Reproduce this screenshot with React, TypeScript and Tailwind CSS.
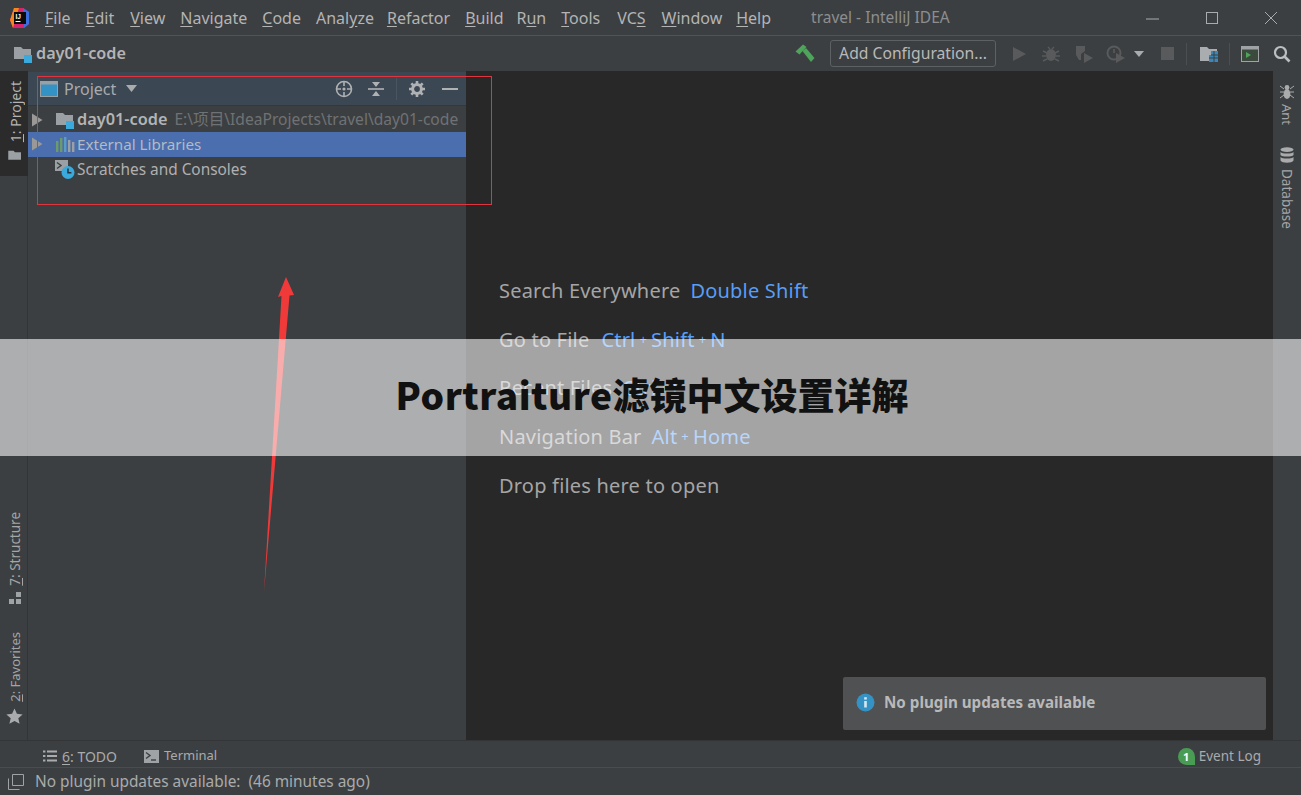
import React from "react";

const FONT = "font-['Noto_Sans','Open_Sans',sans-serif]";

function FolderIcon({ square = true, className = "" }: { square?: boolean; className?: string }) {
  return (
    <svg width="20" height="18" viewBox="0 0 20 18" className={className}>
      <path d="M1 2h7l2 2h8v10H1z" fill="#9aa0a3" />
      {square && <rect x="11" y="10" width="8" height="8" fill="#3aa9dc" />}
    </svg>
  );
}

function Arrow() {
  return (
    <svg width="14" height="14" viewBox="0 0 14 14" className="shrink-0">
      <path d="M2 0.5l10.5 6.5-10.5 6.5z" fill="#9a9997" />
    </svg>
  );
}

function LibIcon() {
  return (
    <svg width="20" height="17" viewBox="0 0 20 17">
      <rect x="1" y="5" width="2.4" height="11" fill="#6d9a6b" />
      <rect x="5" y="2" width="2.4" height="14" fill="#6d9a6b" />
      <rect x="9" y="1" width="2.4" height="15" fill="#5b9cc6" />
      <rect x="13" y="4" width="2.4" height="12" fill="#9aa0a3" />
      <rect x="17" y="6" width="2.4" height="10" fill="#9aa0a3" />
    </svg>
  );
}

function ScratchIcon() {
  return (
    <svg width="21" height="20" viewBox="0 0 21 20">
      <rect x="0" y="0" width="13" height="11" fill="#9aa0a3" />
      <path d="M2 2.5l4 3-4 3" fill="none" stroke="#3c3f41" strokeWidth="1.4" />
      <circle cx="13" cy="12.5" r="6.5" fill="#3aa9dc" />
      <path d="M13 8.5v4.3h3.4" fill="none" stroke="#27333b" strokeWidth="1.5" />
    </svg>
  );
}

function MenuItem({ pre = "", u = "", post = "", className = "" }: { pre?: string; u?: string; post?: string; className?: string }) {
  return (
    <span className={className}>
      {pre}
      <u className="underline-offset-2">{u}</u>
      {post}
    </span>
  );
}

function ShortcutRow({ label, keys, keyClass = "ml-[10px]" }: { label: string; keys: string[]; keyClass?: string }) {
  return (
    <div className="h-[48.75px] flex items-center text-[20px] text-[#a5a5a5] tracking-[0.2px]">
      <span>{label}</span>
      {keys.length > 0 && (
        <span className={`${keyClass} text-[#589df6] flex items-center`}>
          {keys.map((k, i) => (
            <React.Fragment key={k}>
              {i > 0 && <span className="mx-[4px] text-[13px]">+</span>}
              <span>{k}</span>
            </React.Fragment>
          ))}
        </span>
      )}
    </div>
  );
}

function VText({ children, className = "" }: { children: React.ReactNode; className?: string }) {
  return <span className={`[writing-mode:vertical-rl] rotate-180 leading-[16px] ml-[3px] ${className}`}>{children}</span>;
}

export default function App() {
  return (
    <div className={`relative w-[1301px] h-[795px] overflow-hidden flex flex-col bg-[#3c3f41] text-[#bbbbbb] ${FONT}`}>
      {/* Title bar */}
      <div className="h-[36px] shrink-0 flex items-center border-b border-[#515355] pl-[9px]">
        <svg width="22" height="22" viewBox="0 0 22 22" className="shrink-0">
          <path d="M5 1h9l6 4v12l-5 4H4l-3-8z" fill="#d6246e" />
          <path d="M14 1l6 4v12l-5 4z" fill="#3b6fe0" />
          <path d="M1 13L5 1h5L4 21z" fill="#f5871f" />
          <rect x="5" y="5" width="12" height="12" fill="#0b0b0b" />
          <text x="6.5" y="12" fontSize="6.5" fontWeight="700" fill="#fff" fontFamily="Liberation Sans">IJ</text>
          <rect x="6.5" y="14" width="5" height="1" fill="#fff" />
        </svg>
        <div className="ml-[14px] flex items-center text-[16px] text-[#b4b4b4] leading-none">
          <MenuItem u="F" post="ile" />
          <MenuItem u="E" post="dit" className="ml-[15px]" />
          <MenuItem u="V" post="iew" className="ml-[16px]" />
          <MenuItem u="N" post="avigate" className="ml-[15px]" />
          <MenuItem u="C" post="ode" className="ml-[15px]" />
          <MenuItem pre="Anal" u="y" post="ze" className="ml-[15px]" />
          <MenuItem u="R" post="efactor" className="ml-[13px]" />
          <MenuItem u="B" post="uild" className="ml-[15px]" />
          <MenuItem pre="R" u="u" post="n" className="ml-[13px]" />
          <MenuItem u="T" post="ools" className="ml-[15px]" />
          <MenuItem pre="VC" u="S" className="ml-[17px]" />
          <MenuItem u="W" post="indow" className="ml-[16px]" />
          <MenuItem u="H" post="elp" className="ml-[14px]" />
          <span className="ml-[40px] text-[15.5px] text-[#8c8e8f]">travel - IntelliJ IDEA</span>
        </div>
        <div className="ml-auto flex items-center pr-[23px] gap-[45px]">
          <svg width="14" height="14" viewBox="0 0 14 14"><path d="M0 8h13" stroke="#a9abac" strokeWidth="1" /></svg>
          <svg width="14" height="14" viewBox="0 0 14 14"><rect x="1.5" y="1.5" width="11" height="11" fill="none" stroke="#a9abac" /></svg>
          <svg width="14" height="14" viewBox="0 0 14 14"><path d="M1 1l12 12M13 1L1 13" stroke="#a9abac" /></svg>
        </div>
      </div>

      {/* Toolbar */}
      <div className="h-[35px] shrink-0 flex items-center pl-[13px] pr-[10px]">
        <FolderIcon />
        <span className="ml-[3px] text-[16.2px] font-semibold text-[#b4b4b4]">day01-code</span>
        <div className="ml-auto flex items-center">
          <svg width="20" height="20" viewBox="0 0 20 20">
            <path d="M0.500 7.500L8 0.500l3.500 2.500-1.500 1.500L4.500 10.500z" fill="#4ea45a" />
            <path d="M7.500 7l3.500-3L19.500 14l-3.500 4z" fill="#4ea45a" />
          </svg>
          <div className="ml-[15px] h-[27px] w-[166px] flex items-center justify-center rounded-[3px] border border-[#5e6163] pt-px text-[15.7px] text-[#b9b9b9]">
            Add Configuration...
          </div>
          <svg className="ml-[15px]" width="16" height="18" viewBox="0 0 16 18"><path d="M2 2l13 7-13 7z" fill="#585a5b" /></svg>
          <svg className="ml-[15px]" width="18" height="18" viewBox="0 0 18 18">
            <ellipse cx="9" cy="10" rx="5" ry="6" fill="#585a5b" />
            <path d="M1 6l4 2M17 6l-4 2M0 11h4M18 11h-4M1 16l4-2M17 16l-4-2M6 2l2 2M12 2l-2 2" stroke="#585a5b" strokeWidth="1.4" />
          </svg>
          <svg className="ml-[14px]" width="20" height="20" viewBox="0 0 20 20">
            <path d="M2 2h9v5l-4 3v6H5l-3-5z" fill="#585a5b" />
            <path d="M10 9l9 5-9 5z" fill="#585a5b" />
          </svg>
          <svg className="ml-[12px]" width="20" height="20" viewBox="0 0 20 20">
            <circle cx="8" cy="9" r="6.5" fill="none" stroke="#585a5b" strokeWidth="2" />
            <path d="M8 5v4" stroke="#585a5b" strokeWidth="1.6" />
            <path d="M10 9l9 5-9 5z" fill="#585a5b" />
          </svg>
          <svg className="ml-[8px]" width="10" height="6" viewBox="0 0 10 6"><path d="M0 0h10L5 6z" fill="#a9abac" /></svg>
          <div className="ml-[17px] w-[13px] h-[13px] bg-[#585a5b]" />
          <div className="ml-[12px] w-px h-[22px] bg-[#4c4e50]" />
          <svg className="ml-[12px]" width="20" height="18" viewBox="0 0 20 18">
            <path d="M1 2h7l2 2h8v12H1z" fill="#a9adaf" />
            <path d="M12 6h7v11h-9v-7h2z" fill="#3d87b8" />
            <path d="M10 13h9M15 6v11M12 10h7" stroke="#3c3f41" />
          </svg>
          <div className="ml-[10px] w-px h-[22px] bg-[#4c4e50]" />
          <svg className="ml-[11px]" width="18" height="16" viewBox="0 0 18 16">
            <rect x="0.5" y="0.5" width="17" height="15" fill="#3c4a3e" stroke="#a0a3a5" />
            <rect x="0.5" y="0.5" width="17" height="3" fill="#a0a3a5" />
            <path d="M5 6l5 3-5 3z" fill="#4ea45a" />
          </svg>
          <svg className="ml-[14px]" width="18" height="18" viewBox="0 0 18 18">
            <circle cx="7.5" cy="7.5" r="5.500" fill="none" stroke="#bcbfc0" strokeWidth="2.2" />
            <path d="M11.5 11.5l5 5" stroke="#bcbfc0" strokeWidth="2.6" />
          </svg>
        </div>
      </div>

      {/* Main */}
      <div className="flex-1 min-h-0 flex">
        {/* Left stripe */}
        <div className="w-[28px] shrink-0 flex flex-col justify-between border-r border-[#333536]">
          <div className="w-[28px] h-[105px] bg-[#2b2b2b] flex flex-col items-center pt-[10px] gap-[7px]">
            <VText className="text-[14px] text-[#b4b4b4]"><u>1</u>: Project</VText>
            <FolderIcon square={false} className="scale-75 -mt-[2px] ml-[2px]" />
          </div>
          <div className="flex flex-col items-center pb-[15px]">
            <VText className="text-[13.5px] text-[#a5a5a5]"><u>7</u>: Structure</VText>
            <svg className="mt-[6px] ml-[2px]" width="14" height="14" viewBox="0 0 14 14">
              <rect x="8" y="1" width="5" height="5" fill="#a0a3a5" />
              <rect x="1" y="8" width="5" height="5" fill="#a0a3a5" />
              <rect x="8" y="8" width="5" height="5" fill="#a0a3a5" />
            </svg>
            <VText className="text-[13px] text-[#a5a5a5] mt-[27px]"><u>2</u>: Favorites</VText>
            <svg className="mt-[6px] ml-[2px]" width="17" height="17" viewBox="0 0 17 17">
              <path d="M8.5 0.5l2.4 5.3 5.7.6-4.3 3.8 1.3 5.6-5.1-2.9-5.1 2.9 1.3-5.6L.4 6.4l5.7-.6z" fill="#a9abac" />
            </svg>
          </div>
        </div>

        {/* Project panel */}
        <div className="w-[438px] shrink-0 flex flex-col">
          <div className="h-[34px] mt-px shrink-0 flex items-center bg-[#3c4754] border-b border-[#33383d] pl-[12px] pr-[8px]">
            <svg width="18" height="16" viewBox="0 0 18 16">
              <rect x="0.5" y="0.5" width="17" height="15" fill="#3592c4" stroke="#9aa0a3" />
              <rect x="0.5" y="0.5" width="17" height="3" fill="#9aa0a3" />
            </svg>
            <span className="ml-[6px] text-[16px] text-[#a9abac]">Project</span>
            <svg className="ml-[10px]" width="11" height="7" viewBox="0 0 11 7"><path d="M0 0h11L5.5 7z" fill="#a9abac" /></svg>
            <div className="ml-auto flex items-center">
              <svg width="18" height="18" viewBox="0 0 18 18">
                <circle cx="9" cy="9" r="7.5" fill="none" stroke="#afb1b3" strokeWidth="1.6" />
                <circle cx="9" cy="9" r="1.6" fill="#afb1b3" />
                <path d="M9 1v5M9 12v5M1 9h5M12 9h5" stroke="#afb1b3" strokeWidth="1.6" />
              </svg>
              <svg className="ml-[15px]" width="16" height="18" viewBox="0 0 16 18">
                <path d="M0 9h16" stroke="#afb1b3" strokeWidth="1.6" />
                <path d="M8 7L4 2h8zM8 11l4 5H4z" fill="#afb1b3" />
              </svg>
              <div className="ml-[12px] w-px h-[22px] bg-[#4a5561]" />
              <svg className="ml-[12px]" width="16" height="16" viewBox="0 0 16 16">
                <circle cx="8" cy="8" r="4.4" fill="none" stroke="#afb1b3" strokeWidth="3" />
                <path d="M8 0v3M8 13v3M0 8h3M13 8h3M2.3 2.3l2.2 2.2M11.5 11.5l2.2 2.2M13.7 2.3l-2.2 2.2M4.5 11.5l-2.2 2.2" stroke="#afb1b3" strokeWidth="2.6" />
              </svg>
              <div className="ml-[17px] w-[16px] h-[2px] bg-[#afb1b3]" />
            </div>
          </div>
          <div className="pt-px">
            <div className="h-[25px] flex items-center pl-[2px]">
              <Arrow />
              <span className="ml-[11px]"><FolderIcon /></span>
              <span className="ml-[2px] text-[16.3px] font-semibold text-[#b4b4b4]">day01-code</span>
              <span className="ml-[7px] text-[15.6px] text-[#6f7274] whitespace-nowrap font-['Noto_Sans','Noto_Sans_CJK_SC',sans-serif]">E:\项目\IdeaProjects\travel\day01-code</span>
            </div>
            <div className="h-[25px] flex items-center pl-[2px] pb-[1px] bg-[#4b6eaf]">
              <Arrow />
              <span className="ml-[11px]"><LibIcon /></span>
              <span className="ml-[2px] text-[15.2px] text-[#b4bac2]">External Libraries</span>
            </div>
            <div className="h-[25px] flex items-center pl-[27px]">
              <ScratchIcon />
              <span className="ml-px text-[15.4px] text-[#b0b0b0]">Scratches and Consoles</span>
            </div>
          </div>
        </div>

        {/* Editor */}
        <div className="flex-1 min-w-0 flex flex-col bg-[#282828] pl-[33px] pt-[195.5px] relative">
          <ShortcutRow label="Search Everywhere" keys={["Double Shift"]} />
          <ShortcutRow label="Go to File" keys={["Ctrl", "Shift", "N"]} keyClass="ml-[12px]" />
          <ShortcutRow label="Recent Files" keys={["Ctrl", "E"]} />
          <ShortcutRow label="Navigation Bar" keys={["Alt", "Home"]} />
          <ShortcutRow label="Drop files here to open" keys={[]} />
          <div className="absolute right-[7px] bottom-[10px] w-[423px] h-[53px] bg-[#505153] rounded-[2px] flex items-center pl-[13px] pb-[2px]">
            <svg width="19" height="19" viewBox="0 0 19 19">
              <circle cx="9.5" cy="9.5" r="9" fill="#3592c4" />
              <rect x="8.2" y="8" width="2.6" height="6.5" fill="#d8e6ee" />
              <rect x="8.2" y="4.2" width="2.6" height="2.4" fill="#d8e6ee" />
            </svg>
            <span className="ml-[9px] text-[15.2px] font-bold text-[#b9b9b9]">No plugin updates available</span>
          </div>
        </div>

        {/* Right stripe */}
        <div className="w-[28px] shrink-0 flex flex-col items-center pt-[13px]">
          <svg width="14" height="16" viewBox="0 0 14 16">
            <ellipse cx="7" cy="10" rx="3.4" ry="5" fill="#a9abac" />
            <circle cx="7" cy="3.5" r="2.4" fill="#a9abac" />
            <path d="M0 2l4 3M14 2l-4 3M0 8h4M14 8h-4M0 14l4-3M14 14l-4-3" stroke="#a9abac" />
          </svg>
          <span className="[writing-mode:vertical-rl] text-[13px] leading-[16px] text-[#a5a5a5] mt-[4px]">Ant</span>
          <svg className="mt-[22px]" width="14" height="17" viewBox="0 0 14 17">
            <ellipse cx="7" cy="2.6" rx="6.5" ry="2.4" fill="#a9abac" />
            <path d="M.5 5c1.5 2 11.5 2 13 0v3c-1.5 2-11.5 2-13 0zM.5 10c1.5 2 11.5 2 13 0v3.5c-1.5 3-11.5 3-13 0z" fill="#a9abac" />
          </svg>
          <span className="[writing-mode:vertical-rl] text-[13.5px] leading-[16px] text-[#a5a5a5] mt-[5px]">Database</span>
        </div>
      </div>

      {/* Tool window bar */}
      <div className="h-[27px] shrink-0 flex items-center border-t border-[#333536] pl-[43px] pr-[40px] pt-[4px] text-[14px] text-[#a9abac]">
        <svg width="14" height="12" viewBox="0 0 14 12">
          <path d="M0 1.5h2.4M4 1.5h10M0 6h2.4M4 6h10M0 10.5h2.4M4 10.5h10" stroke="#a9abac" strokeWidth="2" />
        </svg>
        <span className="ml-[5px]"><u className="underline-offset-2">6</u>: TODO</span>
        <svg className="ml-[27px]" width="15" height="13" viewBox="0 0 15 13">
          <rect width="15" height="13" fill="#a0a3a5" />
          <path d="M2 2.5l4 3-4 3" fill="none" stroke="#3c3f41" strokeWidth="1.4" />
          <path d="M7 10h5" stroke="#3c3f41" strokeWidth="1.4" />
        </svg>
        <span className="ml-[5px] text-[13px]">Terminal</span>
        <div className="ml-auto flex items-center">
          <span className="w-[17px] h-[17px] rounded-full rounded-br-none bg-[#499c54] flex items-center justify-center text-[11px] font-bold text-white leading-none">1</span>
          <span className="ml-[4px] text-[13.5px]">Event Log</span>
        </div>
      </div>

      {/* Status bar */}
      <div className="h-[28px] shrink-0 flex items-center border-t border-[#4a4c4e] pl-[8px] text-[15.4px] text-[#a9abac]">
        <svg width="16" height="16" viewBox="0 0 16 16">
          <path d="M4.5 .5h11v11h-11zM.5 4.5v11h11" fill="none" stroke="#a0a3a5" />
        </svg>
        <span className="ml-[11px] whitespace-pre">No plugin updates available:  (46 minutes ago)</span>
      </div>

      {/* Annotation box */}
      <div className="absolute left-[37px] top-[76px] w-[455px] h-[129px] border border-[#e0353f] pointer-events-none" />

      {/* Annotation arrow */}
      <svg className="absolute left-[260px] top-[275px]" width="40" height="320" viewBox="0 0 40 320">
        <path d="M4 317L21.5 21 18 22l8-20 8 18-4.500 .5z" fill="#f03a3a" />
      </svg>

      {/* Banner */}
      <div className="absolute left-0 right-0 top-[339px] h-[117px] bg-white/[0.58] flex items-center justify-center pb-[7px] pl-[3px]">
        <span className="text-[37px] leading-none font-black text-[#111111] whitespace-nowrap font-['Noto_Sans_CJK_SC','Noto_Sans',sans-serif]">
          <span className="tracking-[0.5px]">Portraiture</span>滤镜中文设置详解
        </span>
      </div>
    </div>
  );
}
